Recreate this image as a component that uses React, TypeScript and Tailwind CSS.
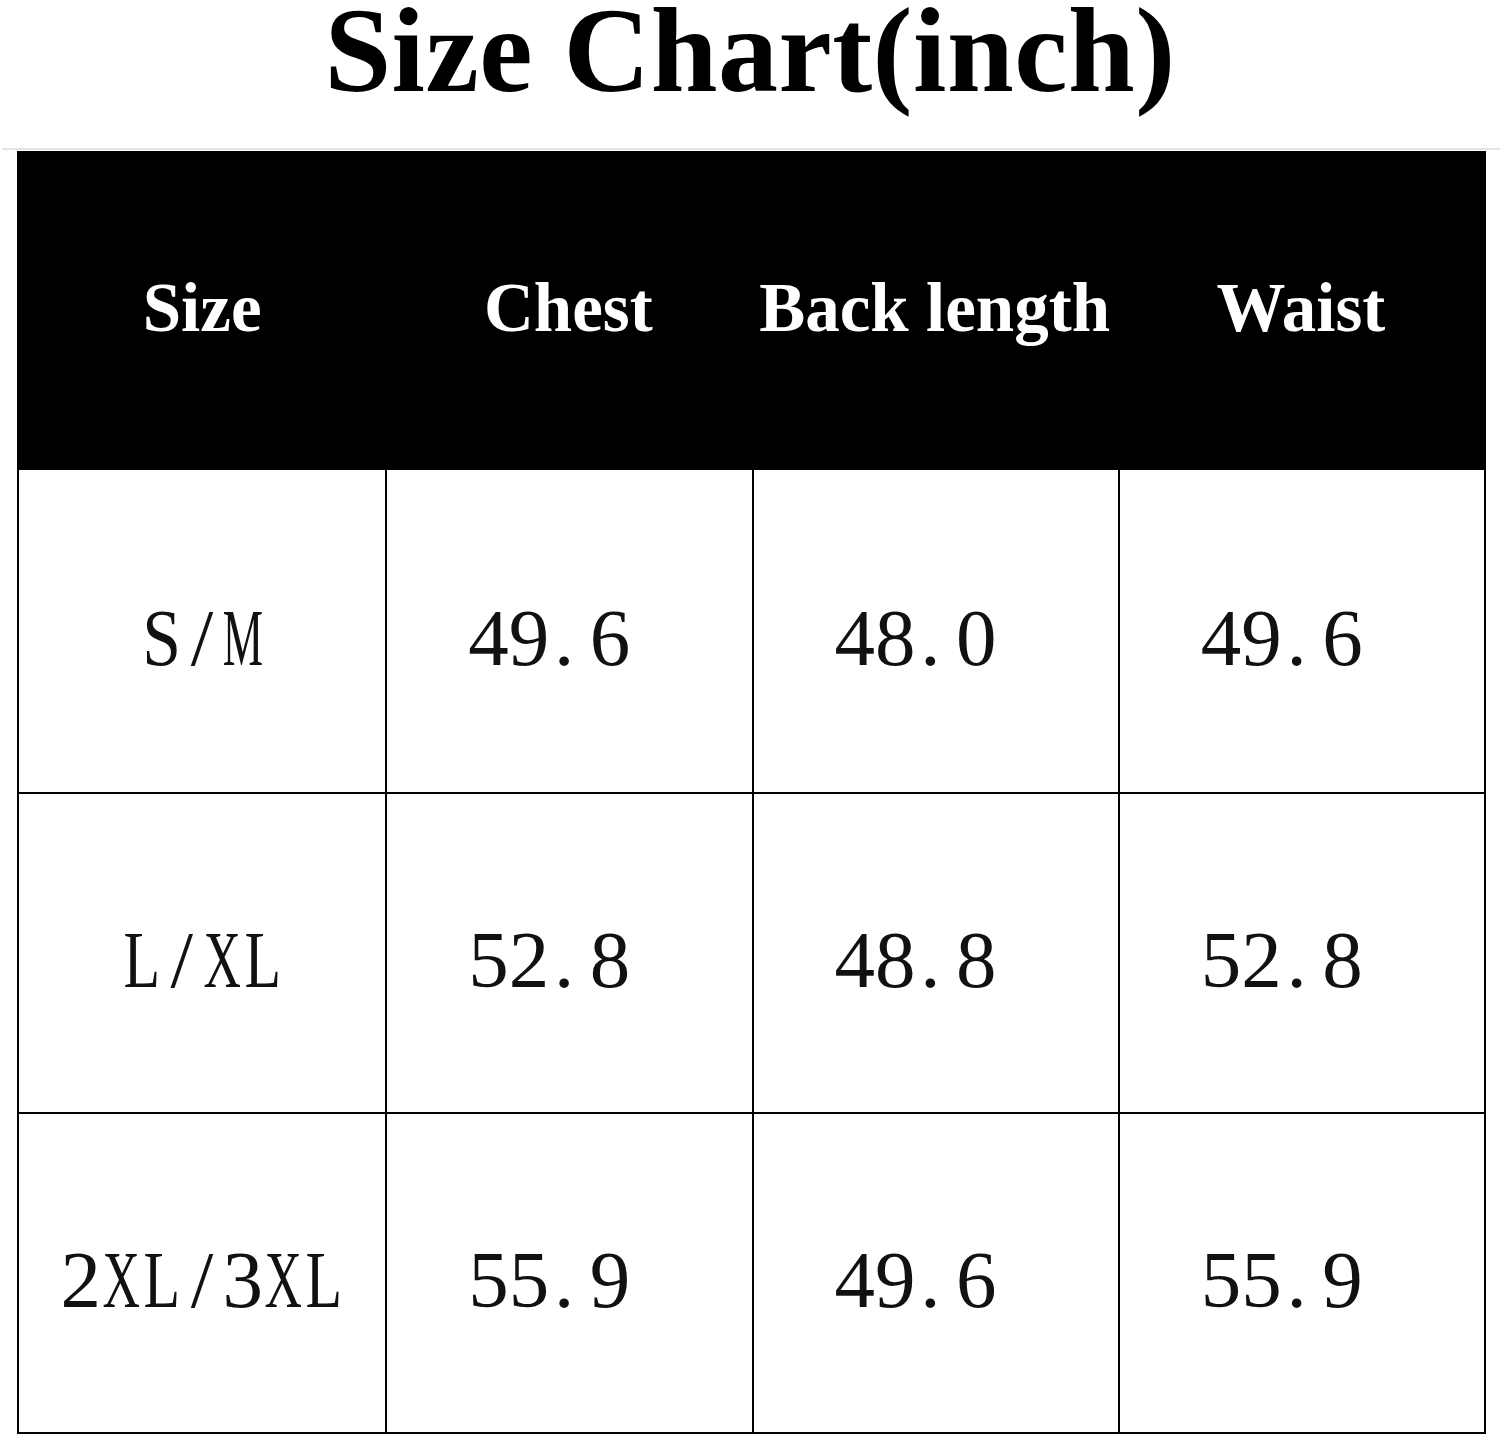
const HEADERS = ["Size", "Chest", "Back length", "Waist"];

// the values carry a trailing half-width space in the original chart
const ROWS = [
  ["S/M", "49.6 ", "48.0 ", "49.6 "],
  ["L/XL", "52.8 ", "48.8 ", "52.8 "],
  ["2XL/3XL", "55.9 ", "49.6 ", "55.9 "],
];

// squeeze wide latin glyphs into the half-width cell
const SQUEEZE: Record<string, string> = {
  M: "scale-x-[0.56]",
  X: "scale-x-[0.64]",
  L: "scale-x-[0.74]",
  S: "scale-x-[0.86]",
};

// mimic the half-width cjk serif look: every glyph sits in a 0.5em cell
function Cells({ text }: { text: string }) {
  return (
    <span className="inline-flex">
      {text.split("").map((c, i) => (
        <span
          key={i}
          className={`flex w-[0.5em] ${c === "." ? "justify-start pl-[0.06em]" : "justify-center"}`}
        >
          <span className={`inline-block whitespace-pre ${SQUEEZE[c] ?? ""}`}>{c}</span>
        </span>
      ))}
    </span>
  );
}

export default function App() {
  return (
    <div className="w-[1500px] h-[1439px] bg-white overflow-hidden font-['Liberation_Serif',serif]">
      <div className="h-[148px] flex justify-center pt-[1px]">
        <h1 className="text-[120px] leading-[100px] font-bold text-black tracking-[0.5px]">
          Size Chart(inch)
        </h1>
      </div>
      <div className="h-[2px] ml-[2px] bg-[#e4e4e4]" />

      <div className="mt-[1px] ml-[17px] w-[1469px] border-2 border-black">
        {/* header */}
        <div className="grid grid-cols-4 h-[317px] bg-black">
          {HEADERS.map(h => (
            <div key={h} className="flex items-center justify-center text-white font-bold text-[69px] leading-none pb-[6px]">
              {h}
            </div>
          ))}
        </div>

        {ROWS.map((row, r) => (
          <div
            key={row[0]}
            className={`grid grid-cols-4 ${r === 0 ? "h-[322px]" : "h-[320px] border-t-2 border-black"}`}
          >
            {row.map((cell, c) => (
              <div
                key={c}
                className={`flex items-center justify-center text-[81px] leading-none text-[#111] pt-[14px] ${c > 0 ? "border-l-2 border-black" : ""}`}
              >
                <Cells text={cell} />
              </div>
            ))}
          </div>
        ))}
      </div>
    </div>
  );
}
